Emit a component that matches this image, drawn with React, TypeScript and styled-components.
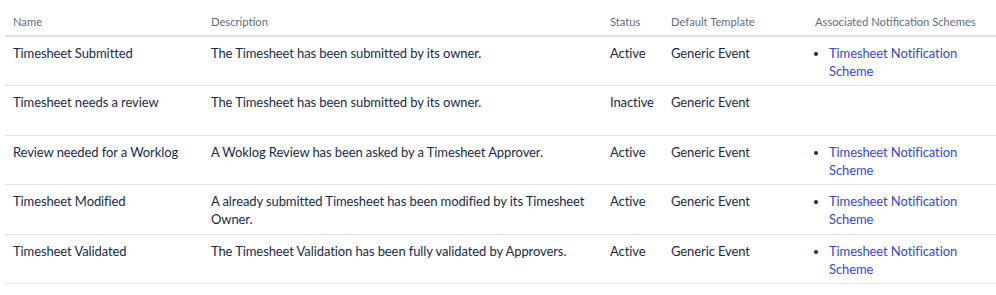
import { createGlobalStyle } from "styled-components";
import styled from "styled-components";

const GlobalStyle = createGlobalStyle`
  body {
    margin: 0;
    background: #ffffff;
    font-family: Lato, "Liberation Sans", sans-serif;
    color: #172b4d;
  }
  *, *::before, *::after {
    box-sizing: border-box;
  }
`;

const Wrapper = styled.div`
  padding: 0 0 0 5px;
`;

const Table = styled.table`
  width: 100%;
  border-collapse: collapse;
  table-layout: fixed;
`;

const HeadCell = styled.th<{ $width: number }>`
  width: ${(p) => p.$width}px;
  padding: 15px 8px 7px;
  text-align: left;
  font-size: 11.2px;
  font-weight: 400;
  line-height: 13px;
  color: #5e6c84;
  border-bottom: 2px solid #dfe1e6;
  white-space: nowrap;
`;

const Row = styled.tr`
  height: 49.6px;
  border-bottom: 1px solid #dfe1e6;
`;

const Cell = styled.td`
  padding: 7px 8px 5px;
  vertical-align: top;
  font-size: 13px;
  letter-spacing: -0.1px;
  line-height: 18px;
`;

const SchemeList = styled.ul`
  margin: 0;
  padding-left: 14px;
`;

const SchemeLink = styled.a`
  color: #3547d4;
  text-decoration: none;
`;

type EventRow = {
  name: string;
  description: string;
  status: string;
  template: string;
  schemes: string[];
};

const rows: EventRow[] = [
  {
    name: "Timesheet Submitted",
    description: "The Timesheet has been submitted by its owner.",
    status: "Active",
    template: "Generic Event",
    schemes: ["Timesheet Notification Scheme"],
  },
  {
    name: "Timesheet needs a review",
    description: "The Timesheet has been submitted by its owner.",
    status: "Inactive",
    template: "Generic Event",
    schemes: [],
  },
  {
    name: "Review needed for a Worklog",
    description: "A Woklog Review has been asked by a Timesheet Approver.",
    status: "Active",
    template: "Generic Event",
    schemes: ["Timesheet Notification Scheme"],
  },
  {
    name: "Timesheet Modified",
    description: "A already submitted Timesheet has been modified by its Timesheet Owner.",
    status: "Active",
    template: "Generic Event",
    schemes: ["Timesheet Notification Scheme"],
  },
  {
    name: "Timesheet Validated",
    description: "The Timesheet Validation has been fully validated by Approvers.",
    status: "Active",
    template: "Generic Event",
    schemes: ["Timesheet Notification Scheme"],
  },
];

const App = () => {
  return (
    <>
      <GlobalStyle />
      <Wrapper>
        <Table>
          <thead>
            <tr>
              <HeadCell $width={198}>Name</HeadCell>
              <HeadCell $width={399}>Description</HeadCell>
              <HeadCell $width={61}>Status</HeadCell>
              <HeadCell $width={144}>Default Template</HeadCell>
              <HeadCell $width={189}>Associated Notification Schemes</HeadCell>
            </tr>
          </thead>
          <tbody>
            {rows.map((row) => (
              <Row key={row.name}>
                <Cell>{row.name}</Cell>
                <Cell>{row.description}</Cell>
                <Cell>{row.status}</Cell>
                <Cell>{row.template}</Cell>
                <Cell>
                  {row.schemes.length > 0 && (
                    <SchemeList>
                      {row.schemes.map((scheme) => (
                        <li key={scheme}>
                          <SchemeLink href="#">{scheme}</SchemeLink>
                        </li>
                      ))}
                    </SchemeList>
                  )}
                </Cell>
              </Row>
            ))}
          </tbody>
        </Table>
      </Wrapper>
    </>
  );
};

export default App;
